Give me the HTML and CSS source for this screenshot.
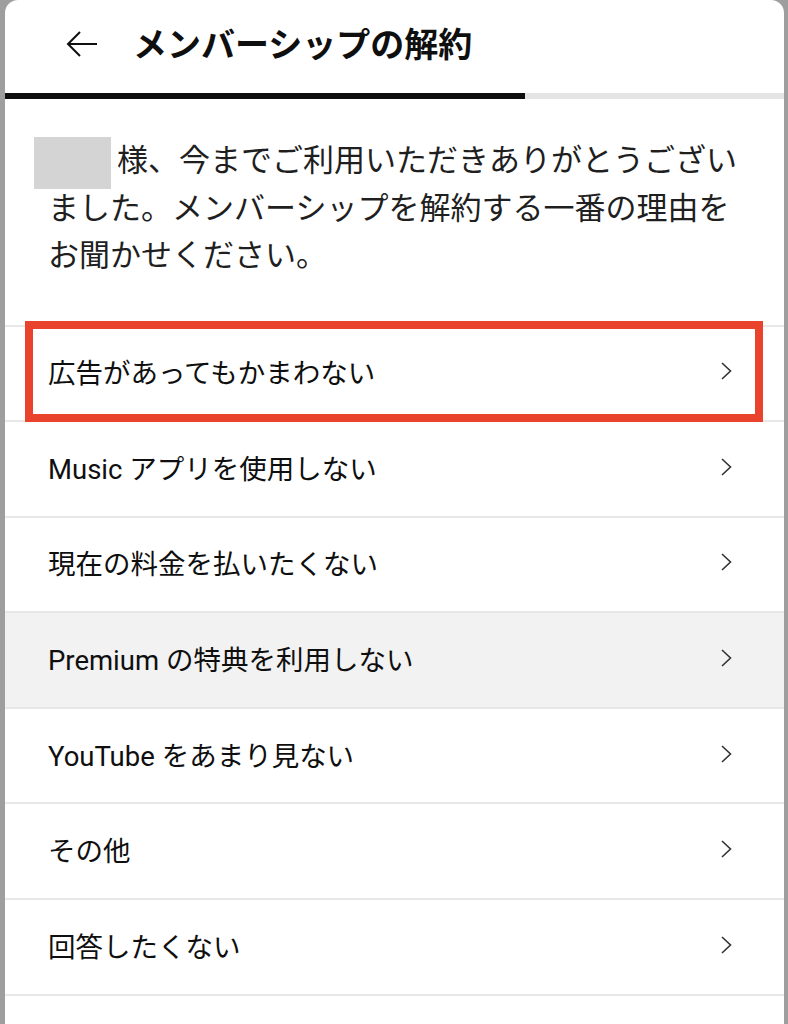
FILE: index.html
```html
<!DOCTYPE html>
<html lang="ja">

<head>
    <meta charset="UTF-8">
    <meta name="viewport" content="width=device-width, initial-scale=1.0">
    <title>メンバーシップの解約</title>
    <link rel="stylesheet" href="styles.css">
</head>

<body>
    <div class="dialog">
        <header class="header">
            <svg class="back" viewBox="0 0 32 26">
                <path d="M31 13H2 M14 1L2 13l12 12"></path>
            </svg>
            <h1 class="title">メンバーシップの解約</h1>
        </header>

        <div class="progress">
            <div class="progress-fill"></div>
        </div>

        <p class="intro">
            <span class="name"></span>様、今までご利用いただきありがとうございました。メンバーシップを解約する一番の理由をお聞かせください。
        </p>

        <ul class="reasons">
            <li class="reason">広告があってもかまわない<svg class="chev" viewBox="0 0 11 18"><path d="M1 1l8.5 8-8.5 8"></path></svg></li>
            <li class="reason">Music アプリを使用しない<svg class="chev" viewBox="0 0 11 18"><path d="M1 1l8.5 8-8.5 8"></path></svg></li>
            <li class="reason">現在の料金を払いたくない<svg class="chev" viewBox="0 0 11 18"><path d="M1 1l8.5 8-8.5 8"></path></svg></li>
            <li class="reason hover">Premium の特典を利用しない<svg class="chev" viewBox="0 0 11 18"><path d="M1 1l8.5 8-8.5 8"></path></svg></li>
            <li class="reason">YouTube をあまり見ない<svg class="chev" viewBox="0 0 11 18"><path d="M1 1l8.5 8-8.5 8"></path></svg></li>
            <li class="reason">その他<svg class="chev" viewBox="0 0 11 18"><path d="M1 1l8.5 8-8.5 8"></path></svg></li>
            <li class="reason">回答したくない<svg class="chev" viewBox="0 0 11 18"><path d="M1 1l8.5 8-8.5 8"></path></svg></li>
            <div class="mark"></div>
        </ul>
    </div>
</body>

</html>
```

FILE: styles.css
```css
* {
    box-sizing: border-box;
}

body {
    margin: 0;
    background: #9e9e9e;
    font-family: Roboto, "Noto Sans CJK JP", sans-serif;
    color: #0f0f0f;
}

.dialog {
    margin: 0 4px 0 5px;
    min-height: 1024px;
    background: #fff;
    border-radius: 13px 13px 0 0;
    overflow: hidden;
}

.header {
    height: 93px;
    padding: 0 0 8px 61px;
    display: flex;
    align-items: center;
    gap: 35px;
}

.back {
    width: 32px;
    height: 26px;
    margin-top: 3px;
}

.back path {
    stroke: #0f0f0f;
    stroke-width: 2px;
    fill: none;
}

.title {
    margin: 0;
    font-size: 34px;
    font-weight: 700;
}

.progress {
    height: 6px;
    background: #e5e5e5;
}

.progress-fill {
    width: 520px;
    height: 100%;
    background: #0f0f0f;
}

.intro {
    margin: 0;
    padding: 38px 32px 45px 43px;
    font-size: 31px;
    line-height: 47.5px;
    color: #1f1f1f;
}

.name {
    display: inline-block;
    width: 77px;
    height: 52px;
    margin: -10px 6px -10px -14px;
    vertical-align: middle;
    background: #d4d4d4;
}

.reasons {
    position: relative;
    margin: 0;
    padding: 0;
    list-style: none;
    border-top: 2px solid #e8e8e8;
}

.reason {
    height: 95.6px;
    padding: 0 52px 4px 43px;
    display: flex;
    align-items: center;
    justify-content: space-between;
    border-bottom: 2px solid #e8e8e8;
    font-size: 27.5px;
}

.reason.hover {
    background: #f2f2f2;
}

.chev {
    width: 11px;
    height: 18px;
}

.chev path {
    stroke: #333;
    stroke-width: 1.6px;
    fill: none;
}

.mark {
    position: absolute;
    top: -6px;
    left: 20px;
    width: 738px;
    height: 101px;
    border: 8px solid #e9432d;
}
```
